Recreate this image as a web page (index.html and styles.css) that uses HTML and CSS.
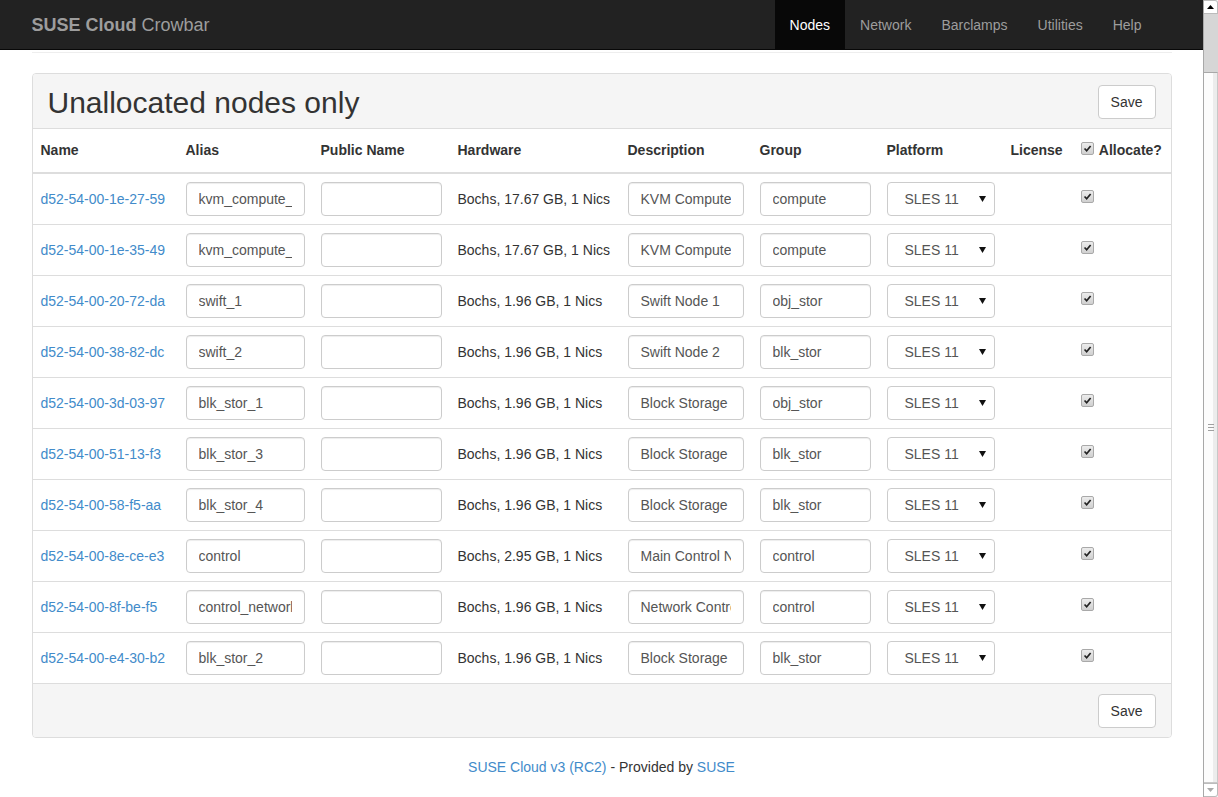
FILE: index.html
```html
<!DOCTYPE html>
<html lang="en">
<head>
<meta charset="utf-8">
<title>SUSE Cloud Crowbar - Nodes</title>
<link rel="stylesheet" href="styles.css">
</head>
<body>
<div class="page">
  <header class="navbar">
    <div class="navbar-inner">
      <a class="brand" href="#"><b>SUSE Cloud</b> Crowbar</a>
      <ul class="nav">
        <li class="active"><a href="#">Nodes</a></li>
        <li><a href="#">Network</a></li>
        <li><a href="#">Barclamps</a></li>
        <li><a href="#">Utilities</a></li>
        <li><a href="#">Help</a></li>
      </ul>
    </div>
  </header>

  <main class="container">
    <div class="divider"></div>
    <section class="panel">
      <div class="panel-heading">
        <h2>Unallocated nodes only</h2>
        <button class="btn">Save</button>
      </div>
      <table class="table">
        <colgroup>
          <col class="c-name"><col class="c-alias"><col class="c-public"><col class="c-hw"><col class="c-desc"><col class="c-group"><col class="c-plat"><col class="c-lic"><col class="c-alloc">
        </colgroup>
        <thead>
          <tr>
            <th>Name</th><th>Alias</th><th>Public Name</th><th>Hardware</th><th>Description</th><th>Group</th><th>Platform</th><th>License</th>
            <th><span class="chk chk-head"><svg viewBox="0 0 13 13"><path d="M3 6.5 L5.5 9.2 L10.2 3.5" fill="none" stroke="#222" stroke-width="2"/></svg></span> Allocate?</th>
          </tr>
        </thead>
        <tbody>
          <tr><td><a href="#">d52-54-00-1e-27-59</a></td><td><input class="fc" value="kvm_compute_1"></td><td><input class="fc" value=""></td><td>Bochs, 17.67 GB, 1 Nics</td><td><input class="fc" value="KVM Compute Node 1"></td><td><input class="fc" value="compute"></td><td><div class="sel"><span>SLES 11</span><svg class="arrow" viewBox="0 0 7 6"><path d="M0 0 H7 L3.5 6 Z" fill="#111"/></svg></div></td><td></td><td><span class="chk"><svg viewBox="0 0 13 13"><path d="M3 6.5 L5.5 9.2 L10.2 3.5" fill="none" stroke="#222" stroke-width="2"/></svg></span></td></tr>
          <tr><td><a href="#">d52-54-00-1e-35-49</a></td><td><input class="fc" value="kvm_compute_2"></td><td><input class="fc" value=""></td><td>Bochs, 17.67 GB, 1 Nics</td><td><input class="fc" value="KVM Compute Node 2"></td><td><input class="fc" value="compute"></td><td><div class="sel"><span>SLES 11</span><svg class="arrow" viewBox="0 0 7 6"><path d="M0 0 H7 L3.5 6 Z" fill="#111"/></svg></div></td><td></td><td><span class="chk"><svg viewBox="0 0 13 13"><path d="M3 6.5 L5.5 9.2 L10.2 3.5" fill="none" stroke="#222" stroke-width="2"/></svg></span></td></tr>
          <tr><td><a href="#">d52-54-00-20-72-da</a></td><td><input class="fc" value="swift_1"></td><td><input class="fc" value=""></td><td>Bochs, 1.96 GB, 1 Nics</td><td><input class="fc" value="Swift Node 1"></td><td><input class="fc" value="obj_stor"></td><td><div class="sel"><span>SLES 11</span><svg class="arrow" viewBox="0 0 7 6"><path d="M0 0 H7 L3.5 6 Z" fill="#111"/></svg></div></td><td></td><td><span class="chk"><svg viewBox="0 0 13 13"><path d="M3 6.5 L5.5 9.2 L10.2 3.5" fill="none" stroke="#222" stroke-width="2"/></svg></span></td></tr>
          <tr><td><a href="#">d52-54-00-38-82-dc</a></td><td><input class="fc" value="swift_2"></td><td><input class="fc" value=""></td><td>Bochs, 1.96 GB, 1 Nics</td><td><input class="fc" value="Swift Node 2"></td><td><input class="fc" value="blk_stor"></td><td><div class="sel"><span>SLES 11</span><svg class="arrow" viewBox="0 0 7 6"><path d="M0 0 H7 L3.5 6 Z" fill="#111"/></svg></div></td><td></td><td><span class="chk"><svg viewBox="0 0 13 13"><path d="M3 6.5 L5.5 9.2 L10.2 3.5" fill="none" stroke="#222" stroke-width="2"/></svg></span></td></tr>
          <tr><td><a href="#">d52-54-00-3d-03-97</a></td><td><input class="fc" value="blk_stor_1"></td><td><input class="fc" value=""></td><td>Bochs, 1.96 GB, 1 Nics</td><td><input class="fc" value="Block Storage 1"></td><td><input class="fc" value="obj_stor"></td><td><div class="sel"><span>SLES 11</span><svg class="arrow" viewBox="0 0 7 6"><path d="M0 0 H7 L3.5 6 Z" fill="#111"/></svg></div></td><td></td><td><span class="chk"><svg viewBox="0 0 13 13"><path d="M3 6.5 L5.5 9.2 L10.2 3.5" fill="none" stroke="#222" stroke-width="2"/></svg></span></td></tr>
          <tr><td><a href="#">d52-54-00-51-13-f3</a></td><td><input class="fc" value="blk_stor_3"></td><td><input class="fc" value=""></td><td>Bochs, 1.96 GB, 1 Nics</td><td><input class="fc" value="Block Storage 3"></td><td><input class="fc" value="blk_stor"></td><td><div class="sel"><span>SLES 11</span><svg class="arrow" viewBox="0 0 7 6"><path d="M0 0 H7 L3.5 6 Z" fill="#111"/></svg></div></td><td></td><td><span class="chk"><svg viewBox="0 0 13 13"><path d="M3 6.5 L5.5 9.2 L10.2 3.5" fill="none" stroke="#222" stroke-width="2"/></svg></span></td></tr>
          <tr><td><a href="#">d52-54-00-58-f5-aa</a></td><td><input class="fc" value="blk_stor_4"></td><td><input class="fc" value=""></td><td>Bochs, 1.96 GB, 1 Nics</td><td><input class="fc" value="Block Storage 4"></td><td><input class="fc" value="blk_stor"></td><td><div class="sel"><span>SLES 11</span><svg class="arrow" viewBox="0 0 7 6"><path d="M0 0 H7 L3.5 6 Z" fill="#111"/></svg></div></td><td></td><td><span class="chk"><svg viewBox="0 0 13 13"><path d="M3 6.5 L5.5 9.2 L10.2 3.5" fill="none" stroke="#222" stroke-width="2"/></svg></span></td></tr>
          <tr><td><a href="#">d52-54-00-8e-ce-e3</a></td><td><input class="fc" value="control"></td><td><input class="fc" value=""></td><td>Bochs, 2.95 GB, 1 Nics</td><td><input class="fc" value="Main Control Node"></td><td><input class="fc" value="control"></td><td><div class="sel"><span>SLES 11</span><svg class="arrow" viewBox="0 0 7 6"><path d="M0 0 H7 L3.5 6 Z" fill="#111"/></svg></div></td><td></td><td><span class="chk"><svg viewBox="0 0 13 13"><path d="M3 6.5 L5.5 9.2 L10.2 3.5" fill="none" stroke="#222" stroke-width="2"/></svg></span></td></tr>
          <tr><td><a href="#">d52-54-00-8f-be-f5</a></td><td><input class="fc" value="control_network"></td><td><input class="fc" value=""></td><td>Bochs, 1.96 GB, 1 Nics</td><td><input class="fc" value="Network Control Node"></td><td><input class="fc" value="control"></td><td><div class="sel"><span>SLES 11</span><svg class="arrow" viewBox="0 0 7 6"><path d="M0 0 H7 L3.5 6 Z" fill="#111"/></svg></div></td><td></td><td><span class="chk"><svg viewBox="0 0 13 13"><path d="M3 6.5 L5.5 9.2 L10.2 3.5" fill="none" stroke="#222" stroke-width="2"/></svg></span></td></tr>
          <tr><td><a href="#">d52-54-00-e4-30-b2</a></td><td><input class="fc" value="blk_stor_2"></td><td><input class="fc" value=""></td><td>Bochs, 1.96 GB, 1 Nics</td><td><input class="fc" value="Block Storage 2"></td><td><input class="fc" value="blk_stor"></td><td><div class="sel"><span>SLES 11</span><svg class="arrow" viewBox="0 0 7 6"><path d="M0 0 H7 L3.5 6 Z" fill="#111"/></svg></div></td><td></td><td><span class="chk"><svg viewBox="0 0 13 13"><path d="M3 6.5 L5.5 9.2 L10.2 3.5" fill="none" stroke="#222" stroke-width="2"/></svg></span></td></tr>
        </tbody>
      </table>
      <div class="panel-footer">
        <button class="btn">Save</button>
      </div>
    </section>
    <footer class="footer">
      <a href="#">SUSE Cloud v3 (RC2)</a> - Provided by <a href="#">SUSE</a>
    </footer>
  </main>
</div>
<div class="scrollbar" aria-hidden="true">
  <div class="sb-btn sb-up"><svg viewBox="0 0 7 4"><path d="M0 4 L3.5 0 L7 4 Z" fill="#000"/></svg></div>
  <div class="sb-track"></div>
  <div class="sb-thumb"><div class="grip"><i></i><i></i><i></i></div></div>
  <div class="sb-btn sb-down"><svg viewBox="0 0 7 4"><path d="M0 0 L3.5 4 L7 0 Z" fill="#aaa"/></svg></div>
</div>
</body>
</html>
```

FILE: styles.css
```css
* { box-sizing: border-box; }
html, body { margin: 0; height: 100%; }
body {
  display: flex;
  overflow: hidden;
  font-family: "Liberation Sans", Arial, sans-serif;
  font-size: 14px;
  line-height: 20px;
  color: #333;
  background: #fff;
}
a { color: #428bca; text-decoration: none; }

.page { flex: 1; min-width: 0; }

/* navbar */
.navbar {
  height: 50px;
  background: #222;
  border-bottom: 1px solid #080808;
}
.navbar-inner {
  width: 1170px;
  margin: 0 auto;
  padding: 0 15px;
  height: 49px;
  display: flex;
  justify-content: space-between;
}
.brand {
  color: #9d9d9d;
  font-size: 18px;
  line-height: 20px;
  padding-top: 15px;
}
.brand b { font-weight: bold; }
.nav {
  list-style: none;
  margin: 0 15px 0 0;
  padding: 0;
  display: flex;
}
.nav a {
  display: block;
  height: 49px;
  padding: 15px 15px 0;
  line-height: 20px;
  color: #9d9d9d;
}
.nav .active a { background: #080808; color: #fff; }

/* container */
.container {
  width: 1170px;
  margin: 0 auto;
  padding: 0 15px;
}
.divider {
  margin-top: 2px;
  border-top: 1px solid #eee;
  margin-bottom: 20px;
}

.panel {
  border: 1px solid #ddd;
  border-radius: 4px;
  background: #fff;
  overflow: hidden;
}
.panel-heading {
  background: #f5f5f5;
  border-bottom: 1px solid #ddd;
  padding: 11px 15px 9px 15px;
  height: 55px;
  display: flex;
  align-items: center;
  justify-content: space-between;
}
.panel-heading h2 {
  margin: 0;
  font-size: 30px;
  font-weight: normal;
  line-height: 33px;
  color: #333;
}
.panel-heading .btn { margin-top: -1px; }
.btn {
  font-family: inherit;
  font-size: 14px;
  line-height: 20px;
  color: #333;
  background: #fff;
  border: 1px solid #ccc;
  border-radius: 4px;
  padding: 6px 12px;
  height: 34px;
}

/* table */
.table {
  width: 100%;
  border-collapse: separate;
  border-spacing: 0;
  table-layout: fixed;
}
.c-name { width: 145px; }
.c-alias { width: 135px; }
.c-public { width: 137px; }
.c-hw { width: 170px; }
.c-desc { width: 132px; }
.c-group { width: 127px; }
.c-plat { width: 124px; }
.c-lic { width: 70px; }
.c-alloc { width: 98px; }

.table th {
  text-align: left;
  font-weight: bold;
  height: 45px;
  padding: 0 8px 1px;
  vertical-align: middle;
  border-bottom: 2px solid #ddd;
  white-space: nowrap;
}
.table td {
  padding: 8px;
  vertical-align: middle;
  border-bottom: 1px solid #ddd;
  white-space: nowrap;
}
.fc {
  display: block;
  width: 100%;
  height: 34px;
  padding: 6px 12px;
  font-family: inherit;
  font-size: 14px;
  line-height: 20px;
  color: #555;
  background: #fff;
  border: 1px solid #ccc;
  border-radius: 4px;
  box-shadow: inset 0 1px 1px rgba(0,0,0,.075);
}
.sel {
  display: flex;
  align-items: center;
  justify-content: space-between;
  width: 100%;
  height: 34px;
  padding: 0 8px 0 17px;
  color: #555;
  border: 1px solid #ccc;
  border-radius: 4px;
  background: #fff;
}
.arrow { width: 7px; height: 6px; }

.chk {
  display: block;
  width: 13px;
  height: 13px;
  border: 1px solid #a9a9a9;
  border-radius: 2px;
  background: linear-gradient(#ececec, #d0d0d0);
  margin-top: -5px;
}
.chk svg { display: block; width: 11px; height: 11px; }
.chk-head {
  display: inline-block;
  margin: 0 2px 0 0;
  vertical-align: 0;
}

.panel-footer {
  background: #f5f5f5;
  padding: 10px 15px 9px;
  display: flex;
  justify-content: flex-end;
}

.footer {
  text-align: center;
  padding-top: 19px;
  line-height: 20px;
}

/* fake page scrollbar */
.scrollbar {
  width: 15px;
  height: 100%;
  display: flex;
  flex-direction: column;
  border-left: 1px solid #a8a8a8;
  background: #fafafa;
}
.sb-btn {
  height: 14px;
  display: flex;
  align-items: center;
  justify-content: center;
  background: #fff;
  border: 1px solid #bbb;
  border-left: 0;
}
.sb-up { border-radius: 0 3px 0 0; }
.sb-down { border-radius: 0 0 3px 0; }
.sb-btn svg { width: 7px; height: 4px; }
.sb-track {
  height: 58px;
  background: #d6d6d6;
}
.sb-thumb {
  flex: 1;
  background: linear-gradient(90deg, #fcfcfc 0 70%, #ececec 70%);
  border-top: 1px solid #a8a8a8;
  border-bottom: 1px solid #c8c8c8;
  border-right: 1px solid #c8c8c8;
  display: flex;
  align-items: center;
  justify-content: center;
}
.grip { display: flex; flex-direction: column; gap: 2px; }
.grip i { display: block; width: 6px; height: 1px; background: #a0a0a0; }
```
